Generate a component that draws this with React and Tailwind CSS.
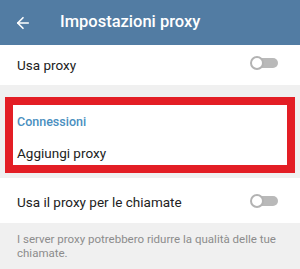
import { ArrowLeft } from 'lucide-react';

function Toggle({ className = '' }) {
  return (
    <div className={`relative w-[28px] h-[14px] flex items-center ${className}`}>
      <div className="absolute left-[2px] right-0 h-[10px] rounded-full bg-[#b9b9b9]" />
      <div className="relative w-[14px] h-[14px] rounded-full bg-white border-2 border-[#b3b3b3]" />
    </div>
  );
}

export default function App() {
  return (
    <div className="w-[300px] h-[269px] overflow-hidden bg-[#f0f0f0] font-['Roboto',sans-serif]">
      {/* Toolbar */}
      <div className="h-[45px] bg-[#527ca3] flex items-center">
        <ArrowLeft size={18} strokeWidth={2.2} className="text-white ml-[14px]" />
        <h1 className="ml-[28px] text-white text-[16.5px] font-medium">Impostazioni proxy</h1>
      </div>

      {/* Usa proxy */}
      <div className="h-[40px] bg-white flex items-center justify-between pl-[17px] pr-[21px]">
        <span className="text-[13.5px] text-[#222]">Usa proxy</span>
        <Toggle className="mb-[5px] mr-[1px]" />
      </div>

      {/* Connessioni */}
      <div className="mt-[12px] mx-[5px] border-[8px] border-[#e31e25] bg-white h-[76px] pl-[4px] flex flex-col">
        <p className="text-[12.5px] font-medium text-[#4a8fc0] mt-[8px]">Connessioni</p>
        <p className="text-[13.5px] text-[#222] mt-[11px]">Aggiungi proxy</p>
      </div>

      {/* Usa il proxy per le chiamate */}
      <div className="mt-[5px] h-[45px] bg-white flex items-center justify-between pl-[17px] pr-[21px]">
        <span className="text-[13.5px] text-[#222] pt-[3px]">Usa il proxy per le chiamate</span>
        <Toggle className="mr-[1px]" />
      </div>

      <p className="px-[17px] pt-[10px] text-[11.5px] leading-[13.5px] text-[#8c8c8c]">
        I server proxy potrebbero ridurre la qualità delle tue chiamate.
      </p>
    </div>
  );
}
